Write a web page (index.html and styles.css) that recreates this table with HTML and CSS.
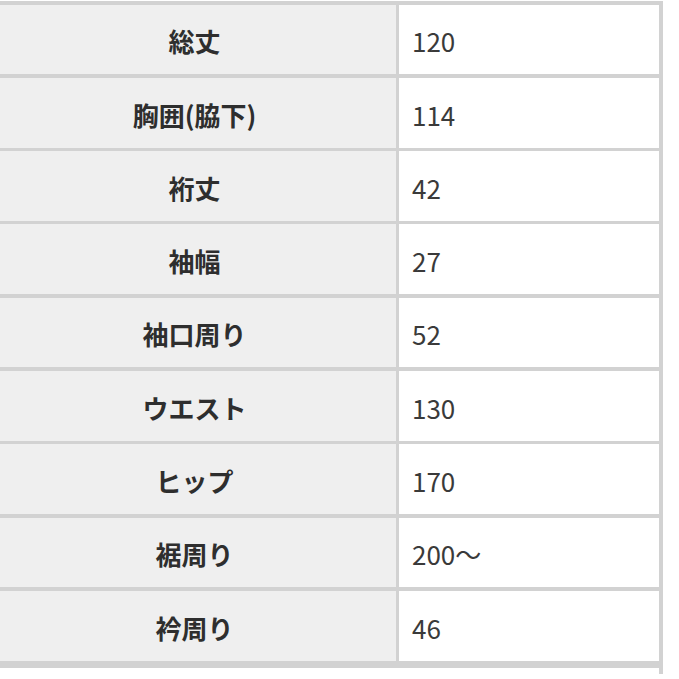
FILE: index.html
```html
<!DOCTYPE html>
<html lang="ja">
<head>
<meta charset="utf-8">
<title>サイズ表</title>
<link rel="stylesheet" href="styles.css">
</head>
<body>
<div class="sheet">
  <div class="label">総丈</div><div class="value">120</div>
  <div class="label">胸囲(脇下)</div><div class="value">114</div>
  <div class="label">裄丈</div><div class="value">42</div>
  <div class="label">袖幅</div><div class="value">27</div>
  <div class="label">袖口周り</div><div class="value">52</div>
  <div class="label">ウエスト</div><div class="value">130</div>
  <div class="label">ヒップ</div><div class="value">170</div>
  <div class="label">裾周り</div><div class="value">200〜</div>
  <div class="label">衿周り</div><div class="value">46</div>
  <div class="tail"></div>
</div>
</body>
</html>
```

FILE: styles.css
```css
html, body {
  margin: 0;
  padding: 0;
  background: #ffffff;
  overflow: hidden;
  height: 679px;
}

.sheet {
  display: grid;
  grid-template-columns: 402px 260px;
  grid-template-rows: repeat(9, 69.8px) 10px;
  gap: 3.5px;
  width: max-content;
  padding: 3.5px 3.5px 0 3.5px;
  margin: 1px 0 0 -10px;
  background: #d2d2d2;
  font-family: "Noto Sans CJK JP", "Noto Sans", sans-serif;
  font-size: 26px;
  color: #333333;
}

.label,
.value {
  display: flex;
  align-items: center;
  padding-top: 4px;
  box-sizing: border-box;
  line-height: 1.4;
}

.label {
  justify-content: center;
  background: #efefef;
  font-weight: 700;
  color: #2e2e2e;
}

.value {
  background: #ffffff;
  padding-left: 13px;
  font-weight: 400;
  color: #3a3a3a;
}

.tail {
  grid-column: 1 / -1;
  margin-top: 3.5px;
  background: #ffffff;
}
```
